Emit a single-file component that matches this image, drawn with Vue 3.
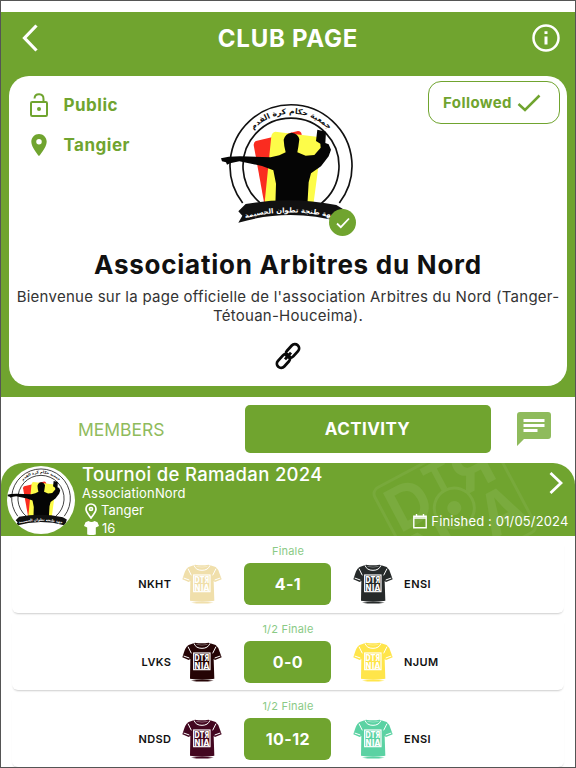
<script setup>
import { ref } from 'vue';

const tab = ref('activity');

const club = {
	name: 'Association Arbitres du Nord',
	city: 'Tangier',
	description: "Bienvenue sur la page officielle de l'association Arbitres du Nord (Tanger-Tétouan-Houceima).",
};

const matches = [
	{ stage: 'Finale', home: 'NKHT', away: 'ENSI', score: '4-1', homeColor: '#f0dfab', awayColor: '#262a2a' },
	{ stage: '1/2 Finale', home: 'LVKS', away: 'NJUM', score: '0-0', homeColor: '#250405', awayColor: '#ffe54a' },
	{ stage: '1/2 Finale', home: 'NDSD', away: 'ENSI', score: '10-12', homeColor: '#430720', awayColor: '#5bd2a3' },
];
</script>

<template>
	<div class="page">
		<svg class="defs" width="0" height="0" aria-hidden="true">
			<defs>
				<path id="arc-top" d="M80 213A157 157 0 0 1 394 213" />
				<path id="arc-band" d="M84 374Q235 330 392 376" />
				<symbol id="club-logo" viewBox="0 0 450 435" overflow="visible">
					<path d="M92 324A183 183 0 1 1 382 324" fill="#fff" stroke="#111" stroke-width="5" />
					<path d="M146 325A144 144 0 1 1 328 325" fill="#fff" stroke="#111" stroke-width="5" />
					<path d="M132 138L258 108Q268 108 269 119L212 322H156L125 150Q125 141 132 138Z" fill="#fa2c20" />
					<path d="M190 110L320 126Q331 129 329 141L305 322H158L178 123Q181 111 190 110Z" fill="#fdfc49" />
					<path d="M27 190L50 185L84 184L176 187L202 181L221 172L217 154L215 134Q220 115 239 113Q258 115 262 133L259 155L256 172L281 182L307 180L326 158L325 146L312 138L316 104L342 110L340 144L350 148L357 164L350 184L327 214L297 235L290 262L286 332H190L192 266L184 226L150 213L82 199L54 205L45 209L42 202L30 199Z" fill="#050505" />
					<path d="M79 349L101 327Q235 303 373 330L398 345L387 382Q235 338 79 383L91 362Z" fill="#111" />
					<text font-family="DejaVu Sans, sans-serif" font-size="23" font-weight="bold" fill="#111" text-anchor="middle">
						<textPath href="#arc-top" startOffset="50%">جمعية حكام كرة القدم</textPath>
					</text>
					<text font-family="DejaVu Sans, sans-serif" font-size="21" font-weight="bold" fill="#fff" text-anchor="middle">
						<textPath href="#arc-band" startOffset="49%">جهة طنجة تطوان الحسيمة</textPath>
					</text>
				</symbol>
				<symbol id="shirt" viewBox="0 0 120 120">
					<path d="M39 2Q59 6 80 2L101 9Q109 15 113 29L119 46L99 54L95 51L97 110Q60 116 24 110L25 51L20 54L1 46L7 28Q11 14 20 9Z" fill="currentColor" />
					<path d="M27 116Q60 111 95 116Q60 121 27 116Z" fill="currentColor" />
					<path d="M36 4Q41 19 60 19Q78 19 84 4M18 14L28 34M102 14L92 34M5 42L22 48M115 42L98 48" fill="none" stroke="#fff" stroke-width="3" />
					<path d="M43 7Q60 12 77 7" fill="none" stroke="#fff" stroke-width="1" />
					<rect x="35" y="33" width="49" height="50" fill="none" stroke="#fff" stroke-width="3.500" />
					<g fill="#fff" font-family="DejaVu Sans, sans-serif" font-size="27" font-weight="bold">
						<text x="37" y="57" textLength="45" lengthAdjust="spacingAndGlyphs">DTЯ</text>
						<text x="37" y="80" textLength="45" lengthAdjust="spacingAndGlyphs">NIA</text>
					</g>
				</symbol>
			</defs>
		</svg>

		<header class="top">
			<nav class="bar">
				<svg class="back" viewBox="0 0 16 28"><path d="M14.500 1.500L2.500 14L14.500 26.500" /></svg>
				<h1>CLUB PAGE</h1>
				<svg class="info" viewBox="0 0 28 28">
					<circle cx="14" cy="14" r="12.500" />
					<path d="M14 12.500V20.500M14 7.200V10" stroke-width="3" />
				</svg>
			</nav>

			<section class="club">
				<div class="club-head">
					<ul class="meta">
						<li>
							<svg class="lock" viewBox="0 0 18 24">
								<rect x="1" y="9" width="16" height="14" rx="1.200" />
								<path d="M4.500 5.500C5 -.2 13.500 0 13.500 6V9" />
								<circle cx="9" cy="16" r="2" />
							</svg>
							Public
						</li>
						<li>
							<svg class="pin" viewBox="5 2 14 20"><path d="M12 2C8.130 2 5 5.130 5 9c0 5.250 7 13 7 13s7-7.750 7-13c0-3.870-3.130-7-7-7zm0 9.500a2.500 2.500 0 1 1 0-5 2.500 2.500 0 0 1 0 5z" /></svg>
							{{ club.city }}
						</li>
					</ul>
					<div class="emblem">
						<svg class="emblem-logo" viewBox="0 0 450 435"><use href="#club-logo" width="450" height="435" /></svg>
						<span class="verified">
							<svg viewBox="0 0 14 12"><path d="M1 6.500L4.800 10.200L13 1.500" /></svg>
						</span>
					</div>
					<button class="follow">
						Followed
						<svg viewBox="0 0 24 18"><path d="M1.500 10L8 16L22.500 1.500" /></svg>
					</button>
				</div>
				<h2>{{ club.name }}</h2>
				<p class="about">{{ club.description }}</p>
				<svg class="link" viewBox="0 0 28 28">
					<g transform="rotate(-48 14 14)">
						<rect x="-.5" y="9.800" width="15.500" height="8.400" rx="4.200" />
						<rect x="13" y="9.800" width="15.500" height="8.400" rx="4.200" />
						<path d="M9.500 14H18.500" />
					</g>
				</svg>
			</section>
		</header>

		<div class="tabs">
			<button class="tab" :class="{ active: tab === 'members' }" @click="tab = 'members'">MEMBERS</button>
			<button class="tab" :class="{ active: tab === 'activity' }" @click="tab = 'activity'">ACTIVITY</button>
			<svg class="chat" viewBox="0 0 34 34">
				<path d="M3 0H31Q34 0 34 3V24Q34 27 31 27H7L0 34V3Q0 0 3 0Z" fill="#8fbb5c" />
				<path d="M6.500 8.500H27.500M6.500 13.500H27.500M6.500 18.500H20.500" stroke="#fff" stroke-width="3" />
			</svg>
		</div>

		<section class="tournament">
			<svg class="watermark" viewBox="0 0 210 73">
				<g transform="translate(89.300 45) rotate(-28)">
					<rect x="-65" y="-54" width="129" height="112" rx="7" />
					<g class="letters">
						<text x="-60" y="-3">D</text>
						<text x="-14" y="-7" textLength="28" lengthAdjust="spacingAndGlyphs">T</text>
						<text x="15" y="-6">Я</text>
						<text x="-58" y="48">N</text>
						<text x="18" y="46">A</text>
					</g>
					<circle class="hub" r="20" />
					<circle class="dot" r="7" />
				</g>
			</svg>
			<svg class="avatar" viewBox="25 11 424 424"><use href="#club-logo" width="450" height="435" /></svg>
			<div class="details">
				<h3>Tournoi de Ramadan 2024</h3>
				<span class="owner">AssociationNord</span>
				<span class="line">
					<svg class="place" viewBox="0 0 12 16"><path d="M6 15C4 12 1 9.300 1 6A5 5 0 0 1 11 6C11 9.300 8 12 6 15Z" /><circle cx="6" cy="6" r="1.500" /></svg>
					Tanger
				</span>
				<span class="line teams">
					<svg class="tee" viewBox="0 0 15 14"><path d="M4.500 0Q7.500 1.800 10.500 0L13.500 1.200L15 5L11.800 6.400V13.500Q7.500 14.500 3.200 13.500V6.400L0 5L1.500 1.200Z" /></svg>
					16
				</span>
			</div>
			<div class="status">
				<svg class="next" viewBox="0 0 14 22"><path d="M1.500 1L12 11L1.500 21" /></svg>
				<span class="date">
					<svg viewBox="0 0 14 15"><path d="M.8 2.300H13.200V13.800H.8ZM1 4H13M3.500 0V3M10.500 0V3" /></svg>
					Finished : 01/05/2024
				</span>
			</div>
		</section>

		<article v-for="(match, i) in matches" :key="i" class="match">
			<span class="stage">{{ match.stage }}</span>
			<div class="row">
				<span class="team home">{{ match.home }}</span>
				<svg class="shirt" :style="{ color: match.homeColor }"><use href="#shirt" /></svg>
				<span class="score">{{ match.score }}</span>
				<svg class="shirt" :style="{ color: match.awayColor }"><use href="#shirt" /></svg>
				<span class="team">{{ match.away }}</span>
			</div>
		</article>
	</div>
</template>

<style>
body {
	margin: 0;
	overflow: hidden;
}
</style>

<style scoped>
.page {
	--green: #70a42f;
	box-sizing: border-box;
	width: 576px;
	height: 768px;
	padding-top: 11px;
	overflow: hidden;
	border: 1px solid #555;
	background: #fff;
	color: #111;
	font-family: Inter, "Noto Sans", sans-serif;
}
.defs { position: absolute; }
svg { flex: none; }
h1, h2, h3, p, ul { margin: 0; padding: 0; }
button {
	padding: 0;
	font-family: inherit;
	background: none;
	border: 0;
}

.top {
	box-sizing: border-box;
	height: 385px;
	padding: 0 8px;
	background: var(--green);
}
.bar {
	display: flex;
	align-items: center;
	justify-content: space-between;
	box-sizing: border-box;
	height: 64px;
	padding: 0 7px 12px 13px;
	color: #fff;
}
.bar svg { fill: none; stroke: currentColor; }
.back { width: 16px; height: 28px; stroke-width: 3.200; }
.info { width: 28px; height: 28px; stroke-width: 2.500; }
h1 {
	padding-left: 6px;
	font-size: 24px;
	font-weight: 700;
	letter-spacing: 0.75px;
}

.club {
	display: flex;
	flex-direction: column;
	align-items: center;
	height: 310px;
	border-radius: 20px;
	background: #fff;
}
.club-head {
	display: grid;
	grid-template-columns: 203px 150px 1fr;
	width: 100%;
	height: 170px;
}
.meta {
	display: flex;
	flex-direction: column;
	gap: 16px;
	padding: 17px 0 0 20.500px;
	list-style: none;
}
.meta li {
	display: flex;
	align-items: center;
	gap: 16px;
	height: 24px;
	color: var(--green);
	font-size: 17px;
	font-weight: 700;
	letter-spacing: 0.5px;
}
.lock { width: 18px; height: 24px; fill: none; stroke: currentColor; stroke-width: 2; }
.lock circle { fill: currentColor; stroke: none; }
.pin { width: 18px; height: 22px; fill: currentColor; }
.emblem { position: relative; padding-top: 19px; }
.emblem-logo { display: block; width: 150px; height: 145px; }
.verified {
	position: absolute;
	left: 117px;
	top: 133px;
	display: flex;
	align-items: center;
	justify-content: center;
	width: 27px;
	height: 27px;
	border-radius: 50%;
	background: var(--green);
}
.verified svg { width: 14px; height: 12px; fill: none; stroke: #fff; stroke-width: 1.800; }
.follow {
	display: flex;
	align-items: center;
	justify-content: center;
	gap: 5px;
	justify-self: end;
	box-sizing: border-box;
	width: 132px;
	height: 43px;
	padding-right: 4px;
	margin: 5px 7px 0 0;
	border: 1.500px solid var(--green);
	border-radius: 13px;
	color: var(--green);
	font-size: 15px;
	font-weight: 700;
	letter-spacing: 0.4px;
}
.follow svg { width: 24px; height: 18px; fill: none; stroke: currentColor; stroke-width: 2.500; }
h2 {
	margin-top: 2px;
	font-size: 26px;
	font-weight: 700;
	line-height: 34px;
	letter-spacing: 0.75px;
	white-space: nowrap;
}
.about {
	width: 554px;
	margin-top: 5px;
	color: #333;
	font-size: 15px;
	line-height: 19px;
	letter-spacing: 0.26px;
	text-align: center;
}
.link { width: 28px; height: 28px; margin-top: 17px; fill: none; stroke: #0a0a0a; stroke-width: 2.800; }

.tabs {
	display: flex;
	align-items: center;
	height: 66px;
}
.tab {
	width: 243.500px;
	height: 48px;
	margin-bottom: 2px;
	border-radius: 5px;
	color: #8fbb5c;
	font-size: 17.500px;
	padding-right: 3px;
}
.tab.active {
	width: 246px;
	padding: 0;
	background: var(--green);
	color: #fff;
	font-size: 17px;
	font-weight: 700;
	letter-spacing: 0.4px;
}
.chat { width: 34px; height: 34px; margin: 0 0 3px 26.500px; }

.tournament {
	position: relative;
	display: flex;
	justify-content: space-between;
	height: 73.400px;
	overflow: hidden;
	border-radius: 22px 22px 0 0;
	background: var(--green);
	color: #fff;
}
.watermark {
	position: absolute;
	right: 0;
	top: 0;
	width: 210px;
	height: 73px;
	fill: none;
	stroke: #78a93b;
	stroke-width: 3;
}
.watermark .letters {
	fill: #7aab3e;
	stroke: none;
	font-size: 60px;
	font-weight: 700;
}
.watermark .hub { fill: var(--green); stroke: #7aab3e; }
.watermark .dot { fill: #7aab3e; stroke: none; }
.avatar {
	width: 68px;
	height: 68px;
	margin: 3px 6px 0 6px;
	border-radius: 50%;
	background: #fff;
}
.details {
	display: flex;
	flex: 1;
	flex-direction: column;
	padding-left: 1px;
	white-space: nowrap;
}
h3 {
	font-size: 18.500px;
	font-weight: 500;
	line-height: 22px;
	letter-spacing: 0.32px;
}
.owner {
	font-size: 13px;
	line-height: 17px;
	letter-spacing: 0.15px;
}
.line {
	display: flex;
	align-items: center;
	gap: 4px;
	padding-left: 3px;
	font-size: 13px;
	line-height: 17.500px;
}
.place { width: 12px; height: 16px; fill: none; stroke: #fff; stroke-width: 1.700; }
.teams { gap: 3px; padding-left: 2px; }
.tee { width: 15px; height: 14px; fill: #fff; }
.status {
	position: relative;
	display: flex;
	flex-direction: column;
	align-items: flex-end;
	justify-content: space-between;
	padding: 9px 6.500px 6.400px 0;
}
.next { width: 14px; height: 22px; margin-right: 6px; fill: none; stroke: #fff; stroke-width: 2.800; }
.date {
	display: flex;
	align-items: center;
	gap: 4px;
	font-size: 13px;
	line-height: 17px;
	letter-spacing: 0.15px;
}
.date svg { width: 14px; height: 15px; fill: none; stroke: #fff; stroke-width: 1.400; }

.match {
	display: flex;
	flex-direction: column;
	align-items: center;
	box-sizing: border-box;
	height: 73px;
	margin: 3.500px 11px 4.300px;
	border-radius: 6px;
	box-shadow: 0 2px 2px -1px rgba(0, 0, 0, 0.2);
}
.stage {
	margin-top: 4.500px;
	color: #8aca85;
	font-size: 11px;
	line-height: 14px;
	letter-spacing: 0.2px;
}
.row {
	display: grid;
	grid-template-columns: 170.400px 40px 22px 87px 21.500px 40px 1fr;
	align-items: center;
	width: 100%;
	height: 42px;
	margin-top: 5px;
}
.team {
	padding-left: 11.200px;
	font-size: 11px;
	font-weight: 600;
	letter-spacing: 0.4px;
}
.team.home { padding: 0 11px 0 0; text-align: right; }
.shirt { width: 40px; height: 40px; }
.score {
	grid-column: 4;
	border-radius: 6px;
	background: var(--green);
	color: #fff;
	font-size: 16px;
	font-weight: 700;
	line-height: 42px;
	letter-spacing: 0.4px;
	text-align: center;
}
.score + .shirt { grid-column: 6; }
</style>
